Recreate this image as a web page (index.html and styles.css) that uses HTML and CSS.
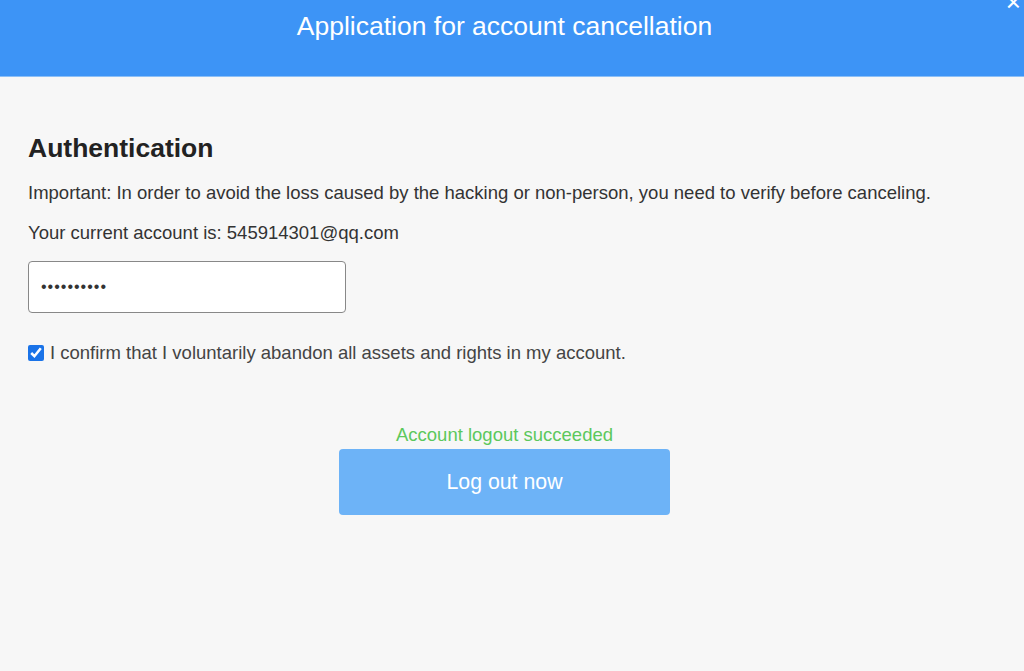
FILE: index.html
```html
<!DOCTYPE html>
<html lang="en">
<head>
  <meta charset="UTF-8" />
  <title>Application for account cancellation</title>
  <link rel="stylesheet" href="styles.css">
</head>
<body>

<div class="dialog">
  <div class="dialog-header">
    <h1>Application for account cancellation</h1>
    <span class="close">&times;</span>
  </div>

  <div class="dialog-body">
    <h2>Authentication</h2>
    <p class="note">Important: In order to avoid the loss caused by the hacking or non-person, you need to verify before canceling.</p>
    <p class="account">Your current account is: 545914301@qq.com</p>

    <input type="password" class="pwd" value="abcdefghij">

    <label class="confirm">
      <input type="checkbox" checked>
      <span>I confirm that I voluntarily abandon all assets and rights in my account.</span>
    </label>

    <div class="actions">
      <div class="status">Account logout succeeded</div>
      <button class="logout">Log out now</button>
    </div>
  </div>
</div>

</body>
</html>
```

FILE: styles.css
```css
body {
  margin: 0;
  background: #f7f7f7;
  font-family: 'Liberation Sans', Arial, sans-serif;
  color: #333;
}

.dialog-header {
  position: relative;
  background: #3d94f6;
  height: 77px;
  border-bottom: 1px solid #8bbff7;
  box-sizing: border-box;
}
.dialog-header h1 {
  margin: 0;
  padding: 11px 15px 0 0;
  text-align: center;
  font-weight: normal;
  font-size: 26.5px;
  line-height: 30px;
  color: #fff;
}
.close {
  position: absolute;
  right: 3px;
  top: -11px;
  font-size: 26px;
  line-height: 26px;
  color: #fff;
}

.dialog-body {
  width: 1009px;
  box-sizing: border-box;
  padding: 56px 28px 0;
}
h2 {
  margin: 0 0 19px;
  font-size: 26.5px;
  line-height: 30px;
  font-weight: bold;
  color: #222;
}
.note, .account {
  margin: 0 0 18px;
  font-size: 18.5px;
  line-height: 22px;
  color: #333;
}
.account {
  margin-bottom: 17px;
}

.pwd {
  display: block;
  width: 318px;
  height: 52px;
  box-sizing: border-box;
  border: 1px solid #888;
  border-radius: 4px;
  background: #fff;
  padding: 0 12px;
  font-size: 16px;
  font-family: 'Liberation Sans', Arial, sans-serif;
  color: #333;
  letter-spacing: 1px;
}

.confirm {
  display: flex;
  align-items: center;
  gap: 6px;
  margin-top: 29px;
  font-size: 18.5px;
  line-height: 22px;
  color: #444;
}
.confirm input {
  width: 16px;
  height: 16px;
  margin: 0;
  accent-color: #1a73e8;
}

.actions {
  display: flex;
  flex-direction: column;
  align-items: center;
  margin-top: 60px;
}
.status {
  font-size: 18.5px;
  color: #5cc85c;
  line-height: 22px;
}
.logout {
  margin-top: 3px;
  width: 331px;
  height: 66px;
  border: none;
  border-radius: 4px;
  background: #6db3f7;
  color: #fff;
  font-size: 21.3px;
  font-family: 'Liberation Sans', Arial, sans-serif;
}
```
